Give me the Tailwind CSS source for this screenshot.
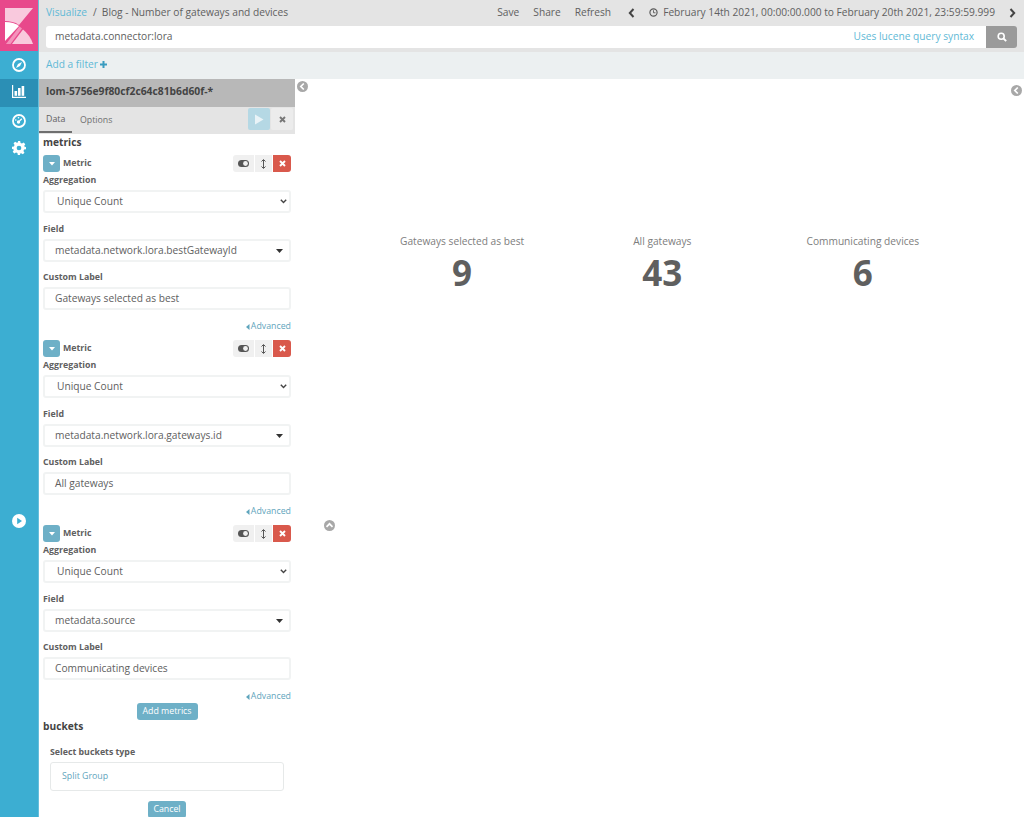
<!DOCTYPE html>
<html lang="en">
<head>
<meta charset="UTF-8">
<title>Visualize</title>
<script src="https://cdn.jsdelivr.net/npm/@tailwindcss/browser@4"></script>
</head>
<body class="bg-white">
<div class="flex w-[1024px] h-[817px] overflow-hidden relative font-['Open_Sans',sans-serif] text-[#606060] text-[10.2px]">

  <!-- sidebar -->
  <aside class="w-[39px] shrink-0 bg-[#3caed2] flex flex-col items-stretch border-r border-[#66bfdc]">
    <div class="h-[51px] bg-[#e8488b] flex items-center justify-center">
      <svg width="28" height="36" viewBox="0 0 28 36" class="mt-px -ml-px">
        <path d="M0 0H28L14 17C10 14 5 13 0 13Z" fill="#f9c9dd"/>
        <path d="M0 14Q9 14 14 18L0 33Z" fill="#fff"/>
        <path d="M14.5 18.5L17 20.5L5.500 36H1Z" fill="#f493bb"/>
        <path d="M18 21.500Q25 27 28 36H7Z" fill="#f9c9dd"/>
      </svg>
    </div>
    <div class="h-[28px] flex items-center justify-center">
      <svg width="14" height="14" viewBox="0 0 14 14"><circle cx="7" cy="7" r="6" fill="none" stroke="#fff" stroke-width="1.8"/><path d="M10 4L8 8L4 10L6 6Z" fill="#fff"/></svg>
    </div>
    <div class="h-[28px] pb-[4px] bg-[#2b8fb5] flex items-center justify-center">
      <svg width="14" height="13" viewBox="0 0 14 13" fill="#fff"><path d="M0 0H1.2V11.8H14V13H0Z"/><rect x="2.500" y="6" width="2.600" height="4.800"/><rect x="6" y="3" width="2.600" height="7.800"/><rect x="9.600" y="1" width="2.600" height="9.800"/></svg>
    </div>
    <div class="h-[27px] flex items-center justify-center">
      <svg width="14" height="14" viewBox="0 0 14 14"><circle cx="7" cy="7" r="6" fill="none" stroke="#fff" stroke-width="1.8"/><circle cx="6.500" cy="8" r="1.700" fill="#fff"/><path d="M7.500 7L9.800 4.800" stroke="#fff" stroke-width="1.300"/><circle cx="3.800" cy="6" r=".8" fill="#fff"/><circle cx="6.500" cy="3.800" r=".8" fill="#fff"/></svg>
    </div>
    <div class="h-[28px] flex items-center justify-center">
      <svg width="14" height="14" viewBox="0 0 24 24" fill="#fff"><path fill-rule="evenodd" d="M10 0H14L14.700 3.300C15.600 3.600 16.400 3.900 17.100 4.400L20 2.600L22.800 5.400L21 8.300C21.500 9 21.800 9.900 22 10.700L24 10V14L20.700 14.700C20.400 15.600 20.100 16.400 19.600 17.100L21.400 20L18.600 22.800L15.700 21C15 21.500 14.100 21.800 13.300 22L14 24H10L9.300 20.700C8.400 20.400 7.600 20.100 6.900 19.600L4 21.400L1.200 18.600L3 15.700C2.500 15 2.200 14.100 2 13.300L0 14V10L3.300 9.300C3.600 8.400 3.900 7.600 4.400 6.900L2.600 4L5.400 1.200L8.300 3C9 2.500 9.900 2.200 10.700 2ZM12 8A4 4 0 1 0 12 16A4 4 0 1 0 12 8Z"/></svg>
    </div>
    <div class="mt-[351px] h-[16px] flex items-center justify-center">
      <svg width="14" height="14" viewBox="0 0 14 14"><circle cx="7" cy="7" r="7" fill="#fff"/><path d="M5.200 3.800L10 7L5.200 10.200Z" fill="#3caed2"/></svg>
    </div>
  </aside>

  <div class="flex-1 flex flex-col min-w-0">
    <!-- top bar -->
    <header class="bg-[#e4e4e4] h-[51px] shrink-0">
      <div class="h-[26px] flex items-center pl-[7px] pr-[8px] justify-between">
        <div class="flex items-center">
          <span class="text-[#5fb9d6]">Visualize</span>
          <span class="ml-[6px] mr-[5px]">/</span>
          <span>Blog - Number of gateways and devices</span>
        </div>
        <div class="flex items-center">
          <span>Save</span>
          <span class="ml-[14px]">Share</span>
          <span class="ml-[14px]">Refresh</span>
          <svg class="ml-[17px]" width="7" height="10" viewBox="0 0 7 10"><path d="M5.500 1L1.800 5L5.500 9" fill="none" stroke="#444" stroke-width="2"/></svg>
          <svg class="ml-[14px] mr-[5px]" width="9" height="9" viewBox="0 0 10 10"><circle cx="5" cy="5" r="4" fill="none" stroke="#5a5a5a" stroke-width="1.300"/><path d="M5 2.500V5.300H7.200" fill="none" stroke="#5a5a5a"/></svg>
          <span>February 14th 2021, 00:00:00.000 to February 20th 2021, 23:59:59.999</span>
          <svg class="ml-[14px]" width="7" height="10" viewBox="0 0 7 10"><path d="M1.500 1L5.200 5L1.500 9" fill="none" stroke="#444" stroke-width="2"/></svg>
        </div>
      </div>
      <div class="ml-[7px] mr-[7px] h-[22px] flex">
        <div class="flex-1 bg-white rounded-l-[3px] flex items-center justify-between pl-[9px] pr-[12px]">
          <span>metadata.connector:lora</span>
          <span class="text-[#5fb9d6]">Uses lucene query syntax</span>
        </div>
        <div class="w-[31px] bg-[#9a9a9a] rounded-r-[3px] flex items-center justify-center">
          <svg width="10" height="10" viewBox="0 0 10 10"><circle cx="4.200" cy="4.200" r="3" fill="none" stroke="#fff" stroke-width="1.600"/><path d="M6.500 6.500L9.200 9.200" stroke="#fff" stroke-width="1.800"/></svg>
        </div>
      </div>
    </header>

    <!-- filter bar -->
    <div class="bg-[#ecf0f1] h-[28px] shrink-0 pl-[7px] pb-[2px] flex items-center border-t border-[#e4e4e4]">
      <span class="text-[#5fb9d6]">Add a filter</span>
      <svg class="ml-[2px]" width="7" height="7" viewBox="0 0 7 7"><path d="M3.500 0V7M0 3.500H7" stroke="#3a9cc0" stroke-width="2"/></svg>
    </div>

    <div class="flex-1 flex min-h-0">
      <!-- editor panel -->
      <section class="w-[256px] shrink-0 flex flex-col">
        <div class="h-[28px] shrink-0 bg-[#b8b8b8] pl-[7px] pb-[3px] flex items-center font-bold text-[10.300px] text-[#444]">lom-5756e9f80cf2c64c81b6d60f-*</div>
        <div class="h-[27px] shrink-0 bg-[#e4e4e4] flex justify-between">
          <div class="flex h-[26px]">
            <div class="w-[33px] pl-[7px] pt-[2px] flex items-center border-b-2 border-[#6f6f6f] text-[8.800px]">Data</div>
            <div class="ml-[8px] pt-[2px] flex items-center text-[8.800px] text-[#6f6f6f]">Options</div>
          </div>
          <div class="flex pr-[2px] pt-[1px] gap-[1px] h-[23px]">
            <div class="w-[22px] bg-[#b5d8e4] rounded-[2px] flex items-center justify-center">
              <svg width="10" height="11" viewBox="0 0 10 11"><path d="M1 0.500L9.500 5.500L1 10.500Z" fill="#e9f3f7"/></svg>
            </div>
            <div class="w-[22px] bg-[#ececec] rounded-[2px] flex items-center justify-center">
              <svg width="7" height="7" viewBox="0 0 7 7"><path d="M1 1L6 6M6 1L1 6" stroke="#777" stroke-width="1.900"/></svg>
            </div>
          </div>
        </div>

        <div class="shrink-0 pl-[4px] pr-[4px] flex flex-col">
          <div class="h-[18px] mb-[1px] flex items-center font-bold text-[10.200px] text-[#444]">metrics</div>

          <!-- metric 1 -->
          <div class="h-[185px]">
            <div class="h-[17px] mt-[2px] flex items-center">
              <div class="w-[17px] h-[17px] bg-[#6eb0c7] rounded-[3px] flex items-center justify-center"><svg width="6" height="4" viewBox="0 0 6 4"><path d="M0 0H6L3 3.500Z" fill="#fff"/></svg></div>
              <span class="ml-[3px] font-bold text-[8.800px]">Metric</span>
              <div class="ml-auto flex gap-px">
                <div class="w-[21px] h-[17px] bg-[#f0f0f0] rounded-l-[3px] flex items-center justify-center"><svg width="11" height="7" viewBox="0 0 11 7"><rect width="11" height="7" rx="3.500" fill="#555"/><circle cx="7.500" cy="3.500" r="2.400" fill="#f0f0f0"/></svg></div>
                <div class="w-[17px] h-[17px] bg-[#f0f0f0] flex items-center justify-center"><svg width="5" height="10" viewBox="0 0 5 10"><path d="M2.500 1V9M0.500 2.500L2.500 0.500L4.500 2.500M0.500 7.500L2.500 9.500L4.500 7.500" fill="none" stroke="#555"/></svg></div>
                <div class="w-[18px] h-[17px] bg-[#d9594c] rounded-r-[3px] flex items-center justify-center"><svg width="7" height="7" viewBox="0 0 7 7"><path d="M1 1L6 6M6 1L1 6" stroke="#fff" stroke-width="1.900"/></svg></div>
              </div>
            </div>
            <div class="h-[14px] mt-[2px] flex items-center font-bold text-[8.800px]">Aggregation</div>
            <div class="h-[23px] mt-[2px] border-2 border-[#f1f3f3] rounded-[3px] pl-[12px] pr-[2px] flex items-center justify-between">
              <span>Unique Count</span>
              <svg width="7" height="5" viewBox="0 0 7 5"><path d="M0.800 0.800L3.500 3.500L6.200 0.800" fill="none" stroke="#444" stroke-width="1.400"/></svg>
            </div>
            <div class="h-[14px] mt-[10px] flex items-center font-bold text-[8.800px]">Field</div>
            <div class="h-[23px] mt-[2px] border-2 border-[#f1f3f3] rounded-[3px] pl-[10px] pr-[6px] flex items-center justify-between">
              <span>metadata.network.lora.bestGatewayId</span>
              <svg width="7" height="4" viewBox="0 0 7 4"><path d="M0 0H7L3.500 4Z" fill="#333"/></svg>
            </div>
            <div class="h-[14px] mt-[9px] flex items-center font-bold text-[8.800px]">Custom Label</div>
            <div class="h-[23px] mt-[2px] border-2 border-[#f1f3f3] rounded-[3px] pl-[10px] flex items-center">Gateways selected as best</div>
            <div class="h-[14px] mt-[10px] flex items-center justify-end text-[#5fa5bd] text-[8.800px]">
              <svg class="mr-[1px]" width="4" height="6" viewBox="0 0 4 6"><path d="M3.500 0V6L0 3Z" fill="#5fa5bd"/></svg>Advanced
            </div>
          </div>

          <!-- metric 2 -->
          <div class="h-[185px]">
            <div class="h-[17px] mt-[2px] flex items-center">
              <div class="w-[17px] h-[17px] bg-[#6eb0c7] rounded-[3px] flex items-center justify-center"><svg width="6" height="4" viewBox="0 0 6 4"><path d="M0 0H6L3 3.500Z" fill="#fff"/></svg></div>
              <span class="ml-[3px] font-bold text-[8.800px]">Metric</span>
              <div class="ml-auto flex gap-px">
                <div class="w-[21px] h-[17px] bg-[#f0f0f0] rounded-l-[3px] flex items-center justify-center"><svg width="11" height="7" viewBox="0 0 11 7"><rect width="11" height="7" rx="3.500" fill="#555"/><circle cx="7.500" cy="3.500" r="2.400" fill="#f0f0f0"/></svg></div>
                <div class="w-[17px] h-[17px] bg-[#f0f0f0] flex items-center justify-center"><svg width="5" height="10" viewBox="0 0 5 10"><path d="M2.500 1V9M0.500 2.500L2.500 0.500L4.500 2.500M0.500 7.500L2.500 9.500L4.500 7.500" fill="none" stroke="#555"/></svg></div>
                <div class="w-[18px] h-[17px] bg-[#d9594c] rounded-r-[3px] flex items-center justify-center"><svg width="7" height="7" viewBox="0 0 7 7"><path d="M1 1L6 6M6 1L1 6" stroke="#fff" stroke-width="1.900"/></svg></div>
              </div>
            </div>
            <div class="h-[14px] mt-[2px] flex items-center font-bold text-[8.800px]">Aggregation</div>
            <div class="h-[23px] mt-[2px] border-2 border-[#f1f3f3] rounded-[3px] pl-[12px] pr-[2px] flex items-center justify-between">
              <span>Unique Count</span>
              <svg width="7" height="5" viewBox="0 0 7 5"><path d="M0.800 0.800L3.500 3.500L6.200 0.800" fill="none" stroke="#444" stroke-width="1.400"/></svg>
            </div>
            <div class="h-[14px] mt-[10px] flex items-center font-bold text-[8.800px]">Field</div>
            <div class="h-[23px] mt-[2px] border-2 border-[#f1f3f3] rounded-[3px] pl-[10px] pr-[6px] flex items-center justify-between">
              <span>metadata.network.lora.gateways.id</span>
              <svg width="7" height="4" viewBox="0 0 7 4"><path d="M0 0H7L3.500 4Z" fill="#333"/></svg>
            </div>
            <div class="h-[14px] mt-[9px] flex items-center font-bold text-[8.800px]">Custom Label</div>
            <div class="h-[23px] mt-[2px] border-2 border-[#f1f3f3] rounded-[3px] pl-[10px] flex items-center">All gateways</div>
            <div class="h-[14px] mt-[10px] flex items-center justify-end text-[#5fa5bd] text-[8.800px]">
              <svg class="mr-[1px]" width="4" height="6" viewBox="0 0 4 6"><path d="M3.500 0V6L0 3Z" fill="#5fa5bd"/></svg>Advanced
            </div>
          </div>

          <!-- metric 3 -->
          <div class="h-[180px]">
            <div class="h-[17px] mt-[2px] flex items-center">
              <div class="w-[17px] h-[17px] bg-[#6eb0c7] rounded-[3px] flex items-center justify-center"><svg width="6" height="4" viewBox="0 0 6 4"><path d="M0 0H6L3 3.500Z" fill="#fff"/></svg></div>
              <span class="ml-[3px] font-bold text-[8.800px]">Metric</span>
              <div class="ml-auto flex gap-px">
                <div class="w-[21px] h-[17px] bg-[#f0f0f0] rounded-l-[3px] flex items-center justify-center"><svg width="11" height="7" viewBox="0 0 11 7"><rect width="11" height="7" rx="3.500" fill="#555"/><circle cx="7.500" cy="3.500" r="2.400" fill="#f0f0f0"/></svg></div>
                <div class="w-[17px] h-[17px] bg-[#f0f0f0] flex items-center justify-center"><svg width="5" height="10" viewBox="0 0 5 10"><path d="M2.500 1V9M0.500 2.500L2.500 0.500L4.500 2.500M0.500 7.500L2.500 9.500L4.500 7.500" fill="none" stroke="#555"/></svg></div>
                <div class="w-[18px] h-[17px] bg-[#d9594c] rounded-r-[3px] flex items-center justify-center"><svg width="7" height="7" viewBox="0 0 7 7"><path d="M1 1L6 6M6 1L1 6" stroke="#fff" stroke-width="1.900"/></svg></div>
              </div>
            </div>
            <div class="h-[14px] mt-[2px] flex items-center font-bold text-[8.800px]">Aggregation</div>
            <div class="h-[23px] mt-[2px] border-2 border-[#f1f3f3] rounded-[3px] pl-[12px] pr-[2px] flex items-center justify-between">
              <span>Unique Count</span>
              <svg width="7" height="5" viewBox="0 0 7 5"><path d="M0.800 0.800L3.500 3.500L6.200 0.800" fill="none" stroke="#444" stroke-width="1.400"/></svg>
            </div>
            <div class="h-[14px] mt-[10px] flex items-center font-bold text-[8.800px]">Field</div>
            <div class="h-[23px] mt-[2px] border-2 border-[#f1f3f3] rounded-[3px] pl-[10px] pr-[6px] flex items-center justify-between">
              <span>metadata.source</span>
              <svg width="7" height="4" viewBox="0 0 7 4"><path d="M0 0H7L3.500 4Z" fill="#333"/></svg>
            </div>
            <div class="h-[14px] mt-[9px] flex items-center font-bold text-[8.800px]">Custom Label</div>
            <div class="h-[23px] mt-[2px] border-2 border-[#f1f3f3] rounded-[3px] pl-[10px] flex items-center">Communicating devices</div>
            <div class="h-[14px] mt-[10px] flex items-center justify-end text-[#5fa5bd] text-[8.800px]">
              <svg class="mr-[1px]" width="4" height="6" viewBox="0 0 4 6"><path d="M3.500 0V6L0 3Z" fill="#5fa5bd"/></svg>Advanced
            </div>
          </div>

          <div class="flex justify-center">
            <div class="w-[61px] h-[17px] bg-[#6eb0c7] rounded-[3px] text-white text-[8.800px] flex items-center justify-center">Add metrics</div>
          </div>
          <div class="h-[14px] flex items-center font-bold text-[10.200px] text-[#444]">buckets</div>
          <div class="ml-[7px] mt-[12px] h-[14px] flex items-center font-bold text-[8.800px]">Select buckets type</div>
          <div class="ml-[7px] mr-[7px] mt-[2px] h-[29px] border border-[#e6e9e9] rounded-[3px] pl-[11px] flex items-center text-[8.800px] text-[#5fa5bd]">Split Group</div>
          <div class="flex justify-center mt-[10px]">
            <div class="w-[38px] h-[17px] bg-[#6eb0c7] rounded-[3px] text-white text-[8.800px] flex items-center justify-center">Cancel</div>
          </div>
        </div>
      </section>

      <!-- visualization -->
      <main class="flex-1 relative">
        <div class="flex pl-[105px] gap-[109px] pt-[155px]">
          <div class="flex flex-col items-center"><span class="text-[#7d7d7d]">Gateways selected as best</span><span class="font-bold text-[35px] leading-[48px] text-[#5f5f5f]">9</span></div>
          <div class="flex flex-col items-center"><span class="text-[#7d7d7d]">All gateways</span><span class="font-bold text-[35px] leading-[48px] text-[#5f5f5f]">43</span></div>
          <div class="flex flex-col items-center ml-[6px]"><span class="text-[#7d7d7d]">Communicating devices</span><span class="font-bold text-[35px] leading-[48px] text-[#5f5f5f]">6</span></div>
        </div>
        <svg class="absolute left-[2px] top-[2px]" width="11" height="11" viewBox="0 0 11 11"><circle cx="5.500" cy="5.500" r="5.500" fill="#a8a8a8"/><path d="M6.800 2.500L3.800 5.500L6.800 8.500" fill="none" stroke="#fff" stroke-width="1.700"/></svg>
        <svg class="absolute left-[716px] top-[6px]" width="11" height="11" viewBox="0 0 11 11"><circle cx="5.500" cy="5.500" r="5.500" fill="#a8a8a8"/><path d="M6.800 2.500L3.800 5.500L6.800 8.500" fill="none" stroke="#fff" stroke-width="1.700"/></svg>
        <svg class="absolute left-[29px] top-[441px]" width="11" height="11" viewBox="0 0 11 11"><circle cx="5.500" cy="5.500" r="5.500" fill="#a8a8a8"/><path d="M2.500 6.800L5.500 3.800L8.500 6.800" fill="none" stroke="#fff" stroke-width="1.700"/></svg>
      </main>
    </div>
  </div>
</div>
</body>
</html>
